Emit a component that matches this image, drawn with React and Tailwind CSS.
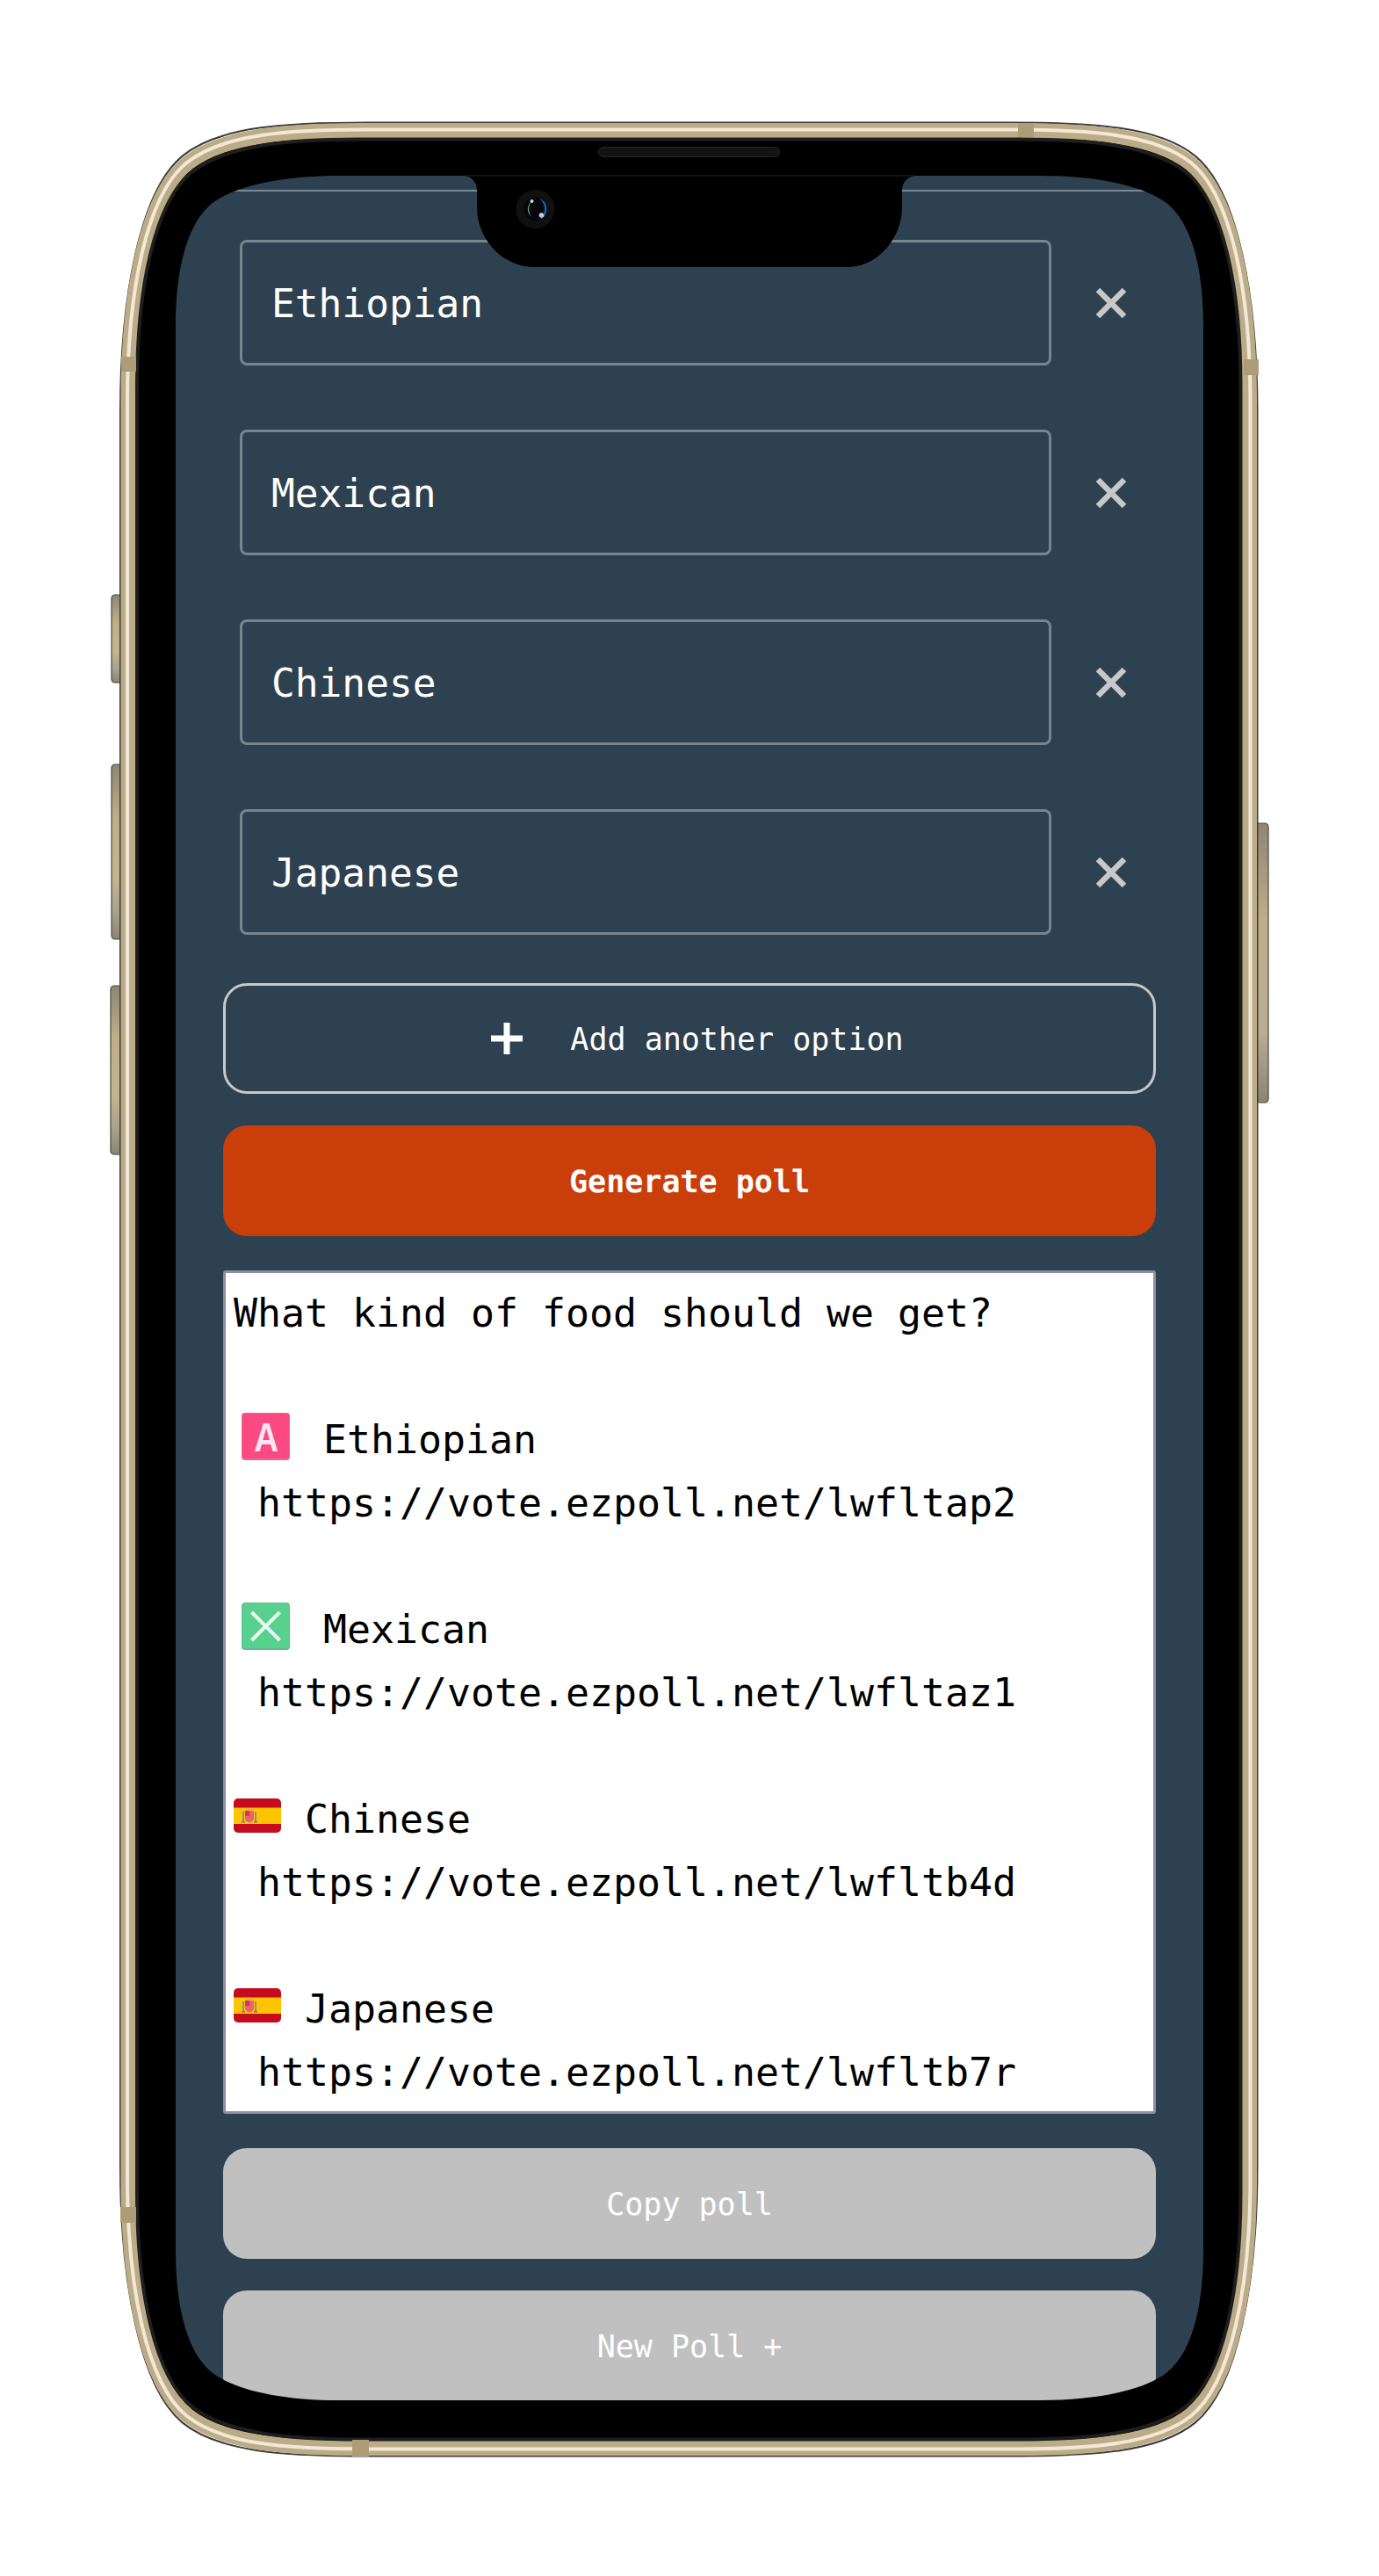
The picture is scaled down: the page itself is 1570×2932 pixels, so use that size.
import React from 'react';

const MONO = "font-['DejaVu_Sans_Mono','Liberation_Mono',monospace]";

const options = ['Ethiopian', 'Mexican', 'Chinese', 'Japanese'];

// Device outline: the same corner curve is reused for every ring of the bezel,
// only the bounds, the corner size and the bulge (j) change.
function ring(x0, y0, x1, y1, dx, dy, j) {
    const px = (k) => x0 + dx * k;
    const py = (k) => y0 + dy * k;
    const qx = (k) => x1 - dx * k;
    const qy = (k) => y1 - dy * k;
    const a = j + 0.12;
    const b = j - 0.105;
    return [
        `M${x0} ${py(1)}`,
        `C${x0} ${py(0.6)} ${px(0.08)} ${py(a)} ${px(0.25)} ${py(j)}`,
        `C${px(0.4)} ${py(b)} ${px(0.675)} ${y0} ${px(1)} ${y0}`,
        `L${qx(1)} ${y0}`,
        `C${qx(0.675)} ${y0} ${qx(0.4)} ${py(b)} ${qx(0.25)} ${py(j)}`,
        `C${qx(0.08)} ${py(a)} ${x1} ${py(0.6)} ${x1} ${py(1)}`,
        `L${x1} ${qy(1)}`,
        `C${x1} ${qy(0.6)} ${qx(0.08)} ${qy(a)} ${qx(0.25)} ${qy(j)}`,
        `C${qx(0.4)} ${qy(b)} ${qx(0.675)} ${y1} ${qx(1)} ${y1}`,
        `L${px(1)} ${y1}`,
        `C${px(0.675)} ${y1} ${px(0.4)} ${qy(b)} ${px(0.25)} ${qy(j)}`,
        `C${px(0.08)} ${qy(a)} ${x0} ${qy(0.6)} ${x0} ${qy(1)}`,
        'Z',
    ].join(' ');
}

function inset(i) {
    return ring(136 + i, 138.5 + i, 1432.5 - i, 2796.5 - i, 284 - 1.55 * i, 332 - 2.53 * i, 0.115 + 0.05 * (i / 64));
}

const screenPath = ring(200, 200, 1370, 2732, 185, 170, 0.165);

function SideButton({ x, y, w, h, right }) {
    return (
        <rect
            x={x} y={y} width={w} height={h} rx="4"
            fill={right ? 'url(#sideRight)' : 'url(#sideLeft)'}
            stroke="#4d4a40" strokeWidth="1.2"
        />
    );
}

function PhoneFrame() {
    const tabs = [
        [1159, 140, 18, 16],
        [1416, 409, 17, 18],
        [138, 406, 17, 17],
        [137, 2512, 18, 18],
        [401, 2777, 19, 19],
    ];
    return (
        <svg className="absolute left-0 top-0 pointer-events-none" width="1570" height="2932" viewBox="0 0 1570 2932">
            <defs>
                <linearGradient id="sideLeft" x1="0" y1="0" x2="0" y2="1">
                    <stop offset="0" stopColor="#8d8672" />
                    <stop offset="0.3" stopColor="#bfae88" />
                    <stop offset="0.65" stopColor="#c4b590" />
                    <stop offset="0.85" stopColor="#a8a18c" />
                    <stop offset="1" stopColor="#8b8470" />
                </linearGradient>
                <linearGradient id="sideRight" x1="0" y1="0" x2="0" y2="1">
                    <stop offset="0" stopColor="#8d8672" />
                    <stop offset="0.35" stopColor="#bfae88" />
                    <stop offset="0.75" stopColor="#b8ad92" />
                    <stop offset="1" stopColor="#8b8470" />
                </linearGradient>
            </defs>

            <SideButton x={127} y={677} w={12} h={100} />
            <SideButton x={127} y={870} w={12} h={199} />
            <SideButton x={126} y={1122} w={13} h={192} />
            <SideButton x={1430} y={937} w={14} h={318} right />

            {/* bezel with the screen cut out */}
            <path d={`${inset(10)} ${screenPath}`} fill="#000" fillRule="evenodd" />
            <path d={inset(1)} fill="none" stroke="#3c3c3c" strokeWidth="2" />
            <path d={inset(10)} fill="none" stroke="#bcab87" strokeWidth="17" />
            <path d={inset(9)} fill="none" stroke="#f1e9d8" strokeWidth="4" />
            <path d={inset(20)} fill="none" stroke="#1e1e1e" strokeWidth="4" />

            {tabs.map(([x, y, w, h]) => (
                <rect key={`${x}-${y}`} x={x} y={y} width={w} height={h} fill="#ae9c78" />
            ))}

            {/* notch */}
            <path
                d="M530 200 C538 202 543 208 543 217 L543 236 C543 270 570 304 609 304 L965 304 C1000 304 1027 270 1027 236 L1027 217 C1027 208 1032 202 1041 200 Z"
                fill="#000"
            />
            <rect x="530" y="199.5" width="511" height="1" fill="#1a2733" />

            {/* speaker */}
            <rect x="681.5" y="167.5" width="206" height="11" rx="5.5" fill="#131313" stroke="#262626" />

            {/* camera */}
            <circle cx="609.5" cy="238" r="22" fill="#101010" />
            <circle cx="609.5" cy="238" r="13.5" fill="#04070c" />
            <path d="M614.5 226 A13 13 0 0 1 614.5 250 A16 16 0 0 0 614.5 226 Z" fill="#1c5ea8" />
            <path d="M605.5 229 A11 11 0 0 0 605.5 247 A14 14 0 0 1 605.5 229 Z" fill="#6f9a88" />
            <circle cx="605.5" cy="229" r="2" fill="#cfd8d0" />
            <circle cx="616.5" cy="245" r="2.8" fill="#cfc6e4" />
        </svg>
    );
}

function RemoveIcon() {
    return (
        <svg width="36" height="36" viewBox="0 0 36 36" fill="none" stroke="#c8c8c8" strokeWidth="6.5">
            <path d="M3 3 L33 33 M33 3 L3 33" />
        </svg>
    );
}

function OptionRow({ label }) {
    return (
        <div className="flex items-center h-[143px]">
            <div className="w-[924px] h-full flex items-center pl-[33px] pt-[3px] border-[3px] border-[#77858f] rounded-[8px] text-white text-[44.5px]">
                {label}
            </div>
            <div className="ml-[50px] w-[36px] flex justify-center">
                <RemoveIcon />
            </div>
        </div>
    );
}

function SquareEmoji({ color, edge, children }) {
    return (
        <svg className="inline-block align-[-8px] blur-[0.5px]" width="75" height="54" viewBox="0 0 75 54">
            <rect x="9" y="0" width="55" height="54" rx="4" fill={edge} />
            <rect x="10" y="1" width="53" height="51" rx="3" fill={color} />
            {children}
        </svg>
    );
}

function LetterEmoji() {
    return (
        <SquareEmoji color="#fb4a82" edge="#f2638f">
            <text
                transform="translate(37 43.5) scale(0.85 1)"
                textAnchor="middle"
                fontFamily="'Liberation Sans', sans-serif"
                fontWeight="700"
                fontSize="46"
                fill="#fbe6f1"
            >
                A
            </text>
        </SquareEmoji>
    );
}

function CrossEmoji() {
    return (
        <SquareEmoji color="#58d08e" edge="#62bd8d">
            <path d="M20.5 11 L52.5 43 M52.5 11 L20.5 43" stroke="#e9f8ef" strokeWidth="4" />
        </SquareEmoji>
    );
}

function SpainFlag() {
    return (
        <svg className="inline-block align-baseline" width="54" height="39" viewBox="0 0 54 39">
            <rect width="54" height="39" rx="5" fill="#c60b1e" />
            <rect y="10.5" width="54" height="18.5" fill="#ffc400" />
            <rect x="10" y="15" width="2" height="11" fill="#8a8f8f" />
            <rect x="24" y="15" width="2" height="11" fill="#8a8f8f" />
            <rect x="9" y="26" width="4" height="1.5" fill="#6b7b8c" />
            <rect x="23" y="26" width="4" height="1.5" fill="#6b7b8c" />
            <path d="M13 14 H23 V22 C23 26 20 27 18 27.5 C16 27 13 26 13 22 Z" fill="#e8636f" />
            <rect x="14" y="12" width="8" height="2.5" fill="#e9a07c" />
            <path d="M13 14 H18 V20 H13 Z" fill="#d4384a" />
        </svg>
    );
}

function PollOutput() {
    return (
        <div className="h-[960px] overflow-hidden bg-white border-[3px] border-[#8c8ea3] rounded-[3px] pt-[10px] pl-[9px] text-black text-[44.85px] leading-[72px] whitespace-pre">
            <div>What kind of food should we get?</div>
            <div>{' '}</div>
            <div><LetterEmoji /> Ethiopian</div>
            <div> https://vote.ezpoll.net/lwfltap2</div>
            <div>{' '}</div>
            <div><CrossEmoji /> Mexican</div>
            <div> https://vote.ezpoll.net/lwfltaz1</div>
            <div>{' '}</div>
            <div><SpainFlag /> Chinese</div>
            <div> https://vote.ezpoll.net/lwfltb4d</div>
            <div>{' '}</div>
            <div><SpainFlag /> Japanese</div>
            <div> https://vote.ezpoll.net/lwfltb7r</div>
        </div>
    );
}

export default function App() {
    return (
        <div className={`relative w-[1570px] h-[2932px] bg-white pt-[200px] pl-[200px] overflow-hidden ${MONO}`}>
            <div className="w-[1170px] h-[2532px] overflow-hidden bg-[#2d4150]">
                <div className="mt-[16px] h-[2px] bg-[#7b8994]" />

                <div className="mt-[55px] ml-[73px] flex flex-col gap-[73px]">
                    {options.map((o) => <OptionRow key={o} label={o} />)}
                </div>

                <div className="mt-[55px] mx-[54px] flex flex-col">
                    <div className="h-[126px] flex items-center justify-center gap-[54px] pl-[18px] border-[3px] border-[#c8c8c8] rounded-[27px] text-white text-[35px]">
                        <svg width="36" height="36" viewBox="0 0 36 36" fill="#fff">
                            <path d="M14.5 0 H21.5 V14.5 H36 V21.5 H21.5 V36 H14.5 V21.5 H0 V14.5 H14.5 Z" />
                        </svg>
                        <span className="pt-[3px]">Add another option</span>
                    </div>

                    <div className="mt-[36px] h-[126px] flex items-center justify-center pt-[3px] rounded-[27px] bg-[#ca3e0a] text-white font-bold text-[35px]">
                        Generate poll
                    </div>

                    <div className="mt-[39px]">
                        <PollOutput />
                    </div>

                    <div className="mt-[39px] h-[126px] flex items-center justify-center pt-[3px] rounded-[27px] bg-[#c0c0c0] text-white text-[35px]">
                        Copy poll
                    </div>

                    <div className="mt-[36px] h-[126px] flex items-center justify-center pt-[3px] rounded-[27px] bg-[#c0c0c0] text-white text-[35px]">
                        New Poll +
                    </div>
                </div>
            </div>

            <PhoneFrame />
        </div>
    );
}
